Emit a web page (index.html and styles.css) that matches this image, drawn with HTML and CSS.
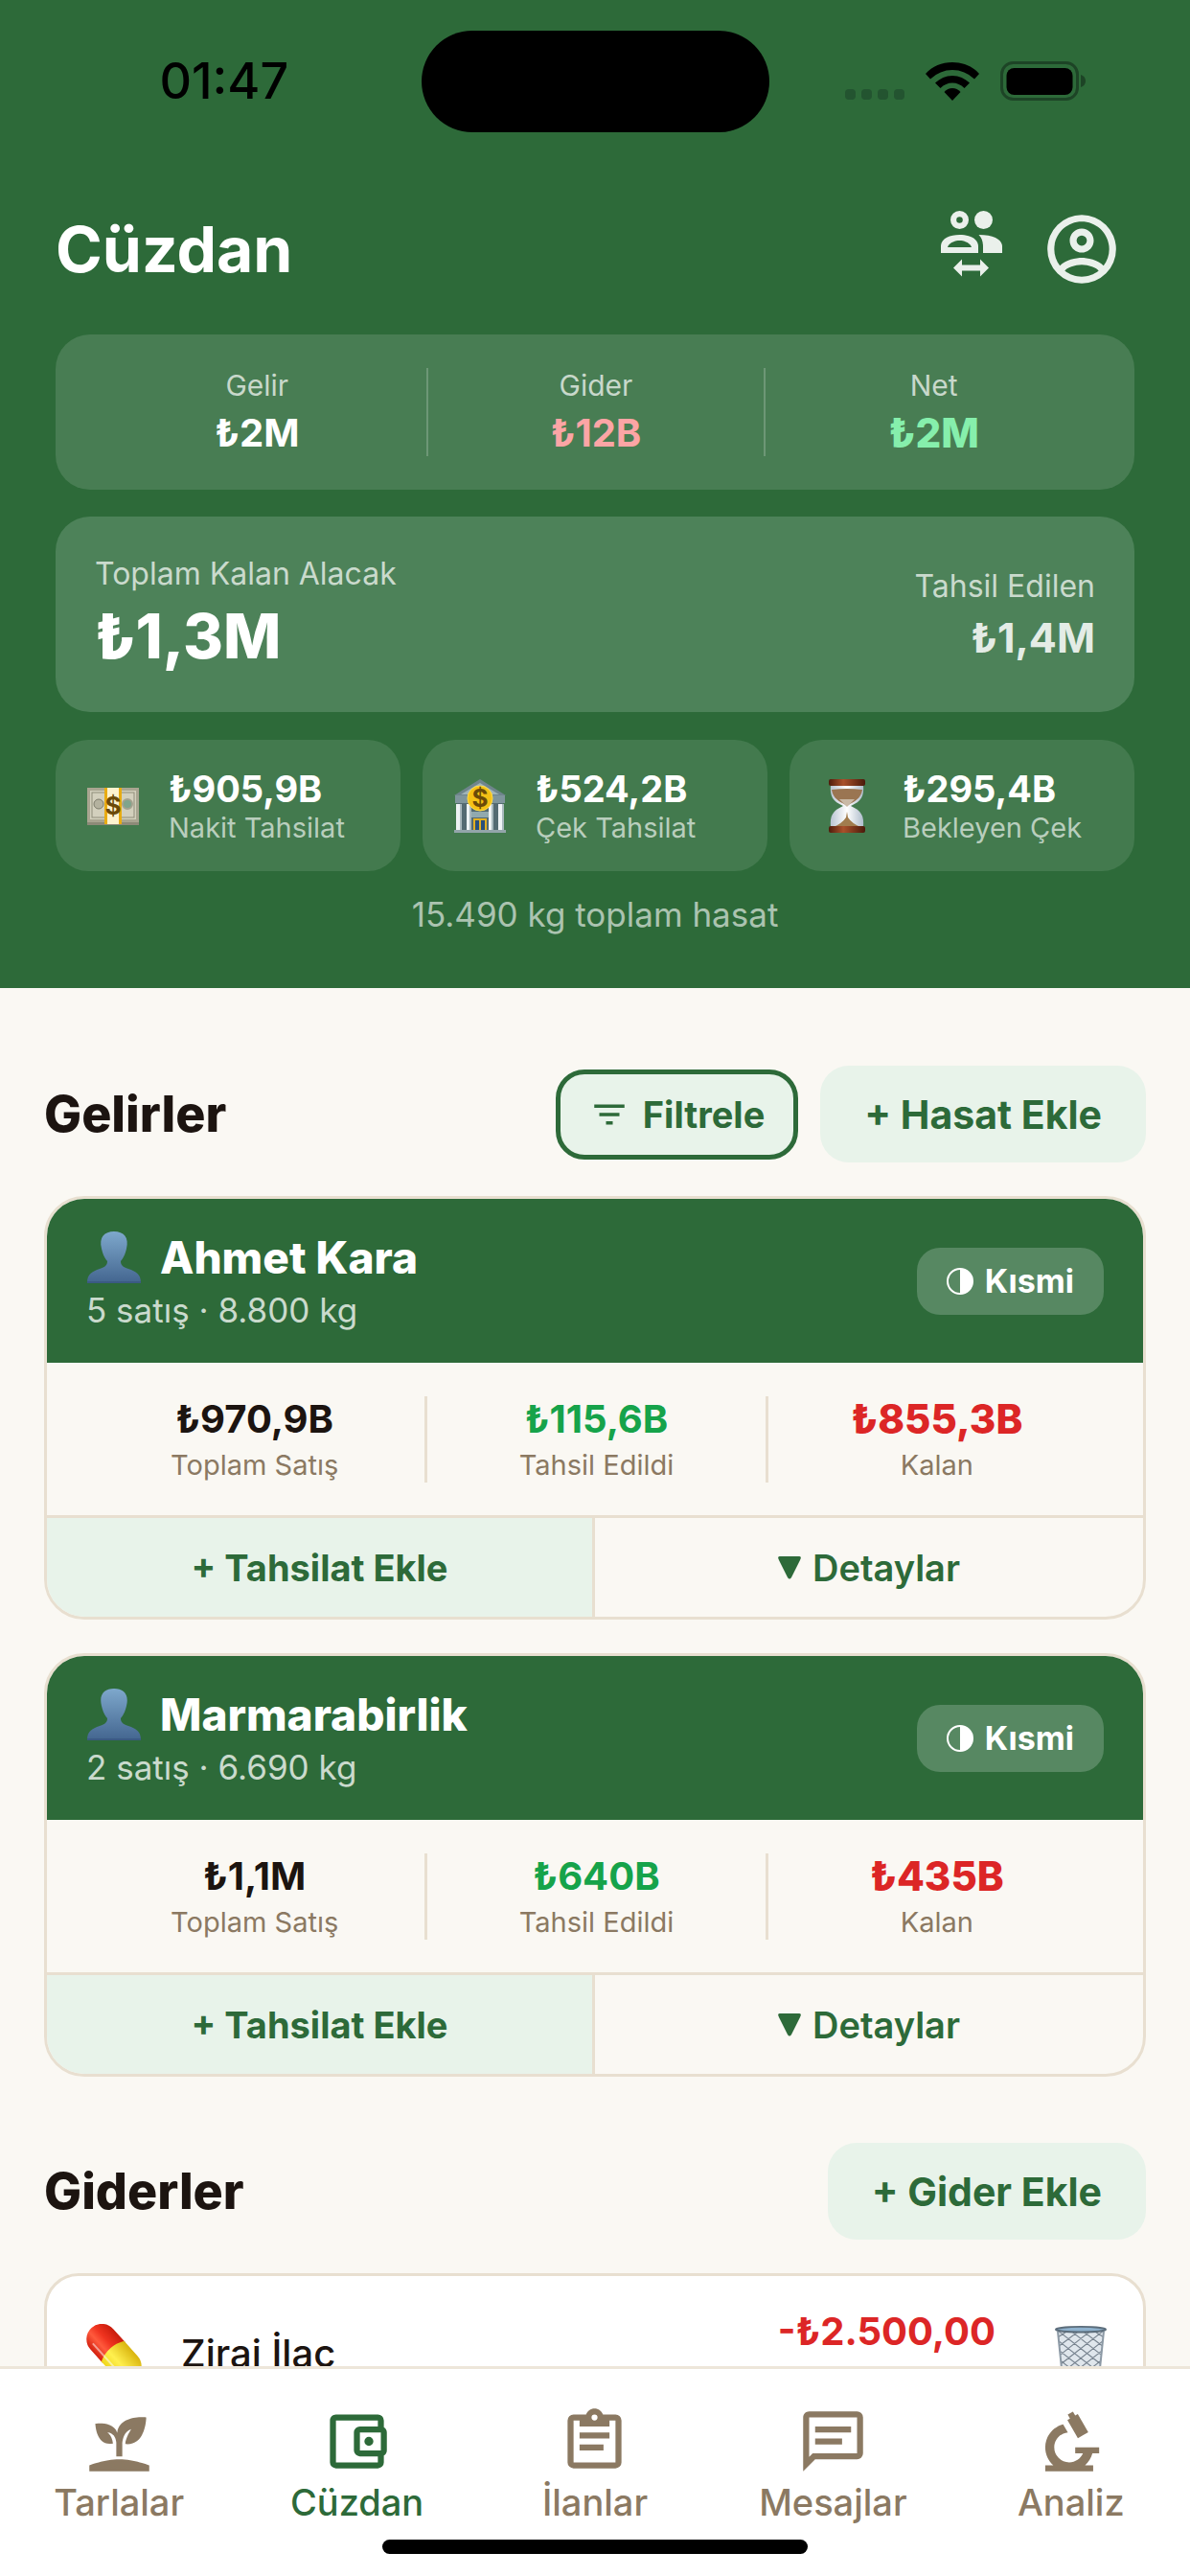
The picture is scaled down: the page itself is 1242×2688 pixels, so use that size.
FILE: index.html
```html
<!DOCTYPE html>
<html lang="tr">
  <head>
    <meta charset="UTF-8" />
    <meta name="viewport" content="width=device-width, initial-scale=1.0" />
    <title>Cüzdan</title>

    <link rel="stylesheet" href="styles.css">
  </head>
  <body>
    <!-- shared icons -->
    <svg class="defs" aria-hidden="true">
      <defs>
        <linearGradient id="bust" x1="0" y1="0" x2="0" y2="1">
          <stop offset="0" stop-color="#7ea8cc" />
          <stop offset="1" stop-color="#43658f" />
        </linearGradient>
        <linearGradient id="pillRed" x1="0" y1="0" x2="1" y2="0">
          <stop offset="0" stop-color="#d3200f" />
          <stop offset="0.35" stop-color="#ff5a3d" />
          <stop offset="0.6" stop-color="#f03420" />
          <stop offset="1" stop-color="#c81c0c" />
        </linearGradient>
        <linearGradient id="pillYellow" x1="0" y1="0" x2="1" y2="0">
          <stop offset="0" stop-color="#f0d61c" />
          <stop offset="0.4" stop-color="#fff04f" />
          <stop offset="1" stop-color="#d9b40e" />
        </linearGradient>
        <linearGradient id="wood" x1="0" y1="0" x2="1" y2="0">
          <stop offset="0" stop-color="#4e1c0c" />
          <stop offset="0.4" stop-color="#a9512b" />
          <stop offset="1" stop-color="#4a1a0b" />
        </linearGradient>
        <linearGradient id="glass" x1="0" y1="0" x2="1" y2="0">
          <stop offset="0" stop-color="#b9c4d2" />
          <stop offset="0.5" stop-color="#ffffff" />
          <stop offset="1" stop-color="#aebccb" />
        </linearGradient>
      </defs>
      <symbol id="person" viewBox="0 0 58 56">
        <path fill="url(#bust)" d="M1 55C1 45 6 43 14 40C20 38 22 36 22 32C18 27 17 23 16 19C13 7 19 1 29 1S45 7 42 19C41 23 40 27 36 32C36 36 38 38 44 40C52 43 57 45 57 55Z" />
        <path fill="#3b5a83" d="M1 53H57V55H1Z" />
      </symbol>
      <symbol id="half" viewBox="0 0 28 28">
        <circle cx="14" cy="14" r="13" fill="none" stroke="#fff" stroke-width="2" />
        <path fill="#fff" d="M14 1A13 13 0 0 1 14 27Z" />
      </symbol>
      <symbol id="down" viewBox="0 0 24 26">
        <path fill="currentColor" d="M2 1H22Q25 1 23 5L14 23Q12 26 10 23L1 5Q-1 1 2 1Z" />
      </symbol>
    </svg>

    <div class="app">
      <header class="header">
        <div class="status-bar">
          <div class="status-time">01:47</div>
          <div class="island"></div>
          <div class="status-icons">
            <svg width="62" height="13" viewBox="0 0 62 13" fill="#235430">
              <rect width="11" height="11" rx="4" />
              <rect x="17" width="11" height="11" rx="4" />
              <rect x="34" width="11" height="11" rx="4" />
              <rect x="51" width="11" height="11" rx="4" />
            </svg>
            <svg width="56" height="41" viewBox="0 0 56 41">
              <path d="M28 0C17 0 7 4 0 12L5 17.500Q15 8 28 8T51 17.500L56 12C49 4 39 0 28 0Z" />
              <path d="M28 14C21 14 15 17 10 21.500L15.500 27Q21 21.500 28 21.500T40.500 27L46 21.500C41 17 35 14 28 14Z" />
              <path d="M28 27C24.500 27 22 28.500 19.500 31L28 40L36.500 31C34 28.500 31.500 27 28 27Z" />
            </svg>
            <svg width="90" height="42" viewBox="0 0 90 42">
              <rect x="1.500" y="1.500" width="79" height="38" rx="12" fill="none" stroke="#1d4426" stroke-width="3" />
              <rect x="6.500" y="7" width="69" height="28" rx="8" />
              <path fill="#1d4426" d="M84 14C87 15 89 17 89 20.500S87 26 84 27Z" />
            </svg>
          </div>
        </div>

        <div class="title-row">
          <h1>Cüzdan</h1>
          <button class="icon-btn" aria-label="Hesap değiştir">
            <svg width="68" height="86" viewBox="20 17 68 86" fill="currentColor" fill-rule="evenodd">
              <path d="M41.500 20a9.500 9.500 0 1 0 0 19a9.500 9.500 0 1 0 0-19M41.500 26.200a3.300 3.300 0 1 1 0 6.600a3.300 3.300 0 1 1 0-6.600" />
              <circle cx="66.500" cy="29.500" r="9.500" />
              <path d="M22 64V57C22 49 31 45 41.500 45S61 49 61 57V64ZM29 58H54C53 54 47 51 41.500 51S30 54 29 58Z" />
              <path d="M61.500 45C77 45 86 50 86 57V64H66V57C66 52 64.500 48 61.500 45Z" />
              <path d="M35 79.500L44 70.500V76.500H63V70.500L72 79.500L63 88.500V82.500H44V88.500Z" />
            </svg>
          </button>
          <button class="icon-btn" aria-label="Profil">
            <svg width="86" height="86" viewBox="0 0 24 24" fill="currentColor">
              <path d="M12,2A10,10 0 0,0 2,12A10,10 0 0,0 12,22A10,10 0 0,0 22,12A10,10 0 0,0 12,2M7.07,18.28C7.5,17.38 10.12,16.5 12,16.5C13.88,16.5 16.5,17.38 16.93,18.28C15.57,19.36 13.86,20 12,20C10.14,20 8.43,19.36 7.07,18.28M18.36,16.83C16.93,15.09 13.46,14.5 12,14.5C10.54,14.5 7.07,15.09 5.64,16.83C4.62,15.5 4,13.82 4,12C4,7.59 7.59,4 12,4C16.41,4 20,7.59 20,12C20,13.82 19.38,15.5 18.36,16.83M12,6C10.06,6 8.5,7.56 8.5,9.5C8.5,11.44 10.06,13 12,13C13.94,13 15.5,11.44 15.5,9.5C15.5,7.56 13.94,6 12,6M12,11A1.5,1.5 0 0,1 10.5,9.5A1.5,1.5 0 0,1 12,8A1.5,1.5 0 0,1 13.5,9.5A1.5,1.5 0 0,1 12,11Z" />
            </svg>
          </button>
        </div>

        <div class="summary">
          <div class="summary-item">
            <span class="label">Gelir</span>
            <span class="value">₺2M</span>
          </div>
          <div class="summary-item">
            <span class="label">Gider</span>
            <span class="value pink">₺12B</span>
          </div>
          <div class="summary-item">
            <span class="label">Net</span>
            <span class="value mint">₺2M</span>
          </div>
        </div>

        <div class="receivable">
          <div>
            <div class="rec-label">Toplam Kalan Alacak</div>
            <div class="rec-total">₺1,3M</div>
          </div>
          <div class="rec-right">
            <div class="rec-label">Tahsil Edilen</div>
            <div class="rec-paid">₺1,4M</div>
          </div>
        </div>

        <div class="methods">
          <div class="method">
            <svg width="56" height="56" viewBox="0 0 56 56">
              <path fill="#8d8a78" d="M1 45H55V48H1Z" />
              <rect x="1" y="9" width="54" height="36" fill="#a9a591" />
              <rect x="4" y="12" width="48" height="30" fill="#d3d0bd" />
              <rect x="6" y="14" width="44" height="26" fill="none" stroke="#8f8d7b" stroke-width="1" />
              <circle cx="13" cy="26" r="5" fill="#b4b29f" stroke="#7d7c6c" />
              <circle cx="43" cy="26" r="5" fill="#7fa48c" stroke="#a3a28f" stroke-width="2" />
              <rect x="19" y="9" width="18" height="38" fill="#fdf3cf" />
              <path fill="#e8ac12" d="M19 9H22V47H19ZM34 9H37V47H34Z" />
              <text x="28" y="37" class="coin-sign">$</text>
            </svg>
            <div>
              <div class="method-value">₺905,9B</div>
              <div class="method-label">Nakit Tahsilat</div>
            </div>
          </div>
          <div class="method">
            <svg width="56" height="56" viewBox="0 0 56 56">
              <path fill="#6f858c" d="M28 0L55 17H1Z" />
              <path fill="#9fb3b8" d="M28 4L48 16H8Z" />
              <rect x="2" y="17" width="52" height="8" fill="#7f959b" />
              <rect x="4" y="25" width="48" height="28" fill="#546a72" />
              <path fill="#eef2f4" d="M3 26H9V53H3ZM14 26H19V53H14ZM37 26H42V53H37ZM47 26H53V53H47Z" />
              <path fill="#a9b8bd" d="M7 26H9V53H7ZM17 26H19V53H17ZM40 26H42V53H40ZM51 26H53V53H51Z" />
              <rect x="19" y="34" width="18" height="6" fill="#91a9ae" />
              <rect x="21" y="41" width="14" height="13" fill="#e3b021" />
              <path fill="#28507c" d="M23 43H27V54H23ZM29 43H33V54H29Z" />
              <rect x="1" y="53" width="54" height="3" fill="#93a5aa" />
              <circle cx="28" cy="20" r="13" fill="#f5c116" stroke="#ffdc4b" stroke-width="1" />
              <text x="28" y="29" class="coin-sign">$</text>
            </svg>
            <div>
              <div class="method-value">₺524,2B</div>
              <div class="method-label">Çek Tahsilat</div>
            </div>
          </div>
          <div class="method">
            <svg width="56" height="56" viewBox="0 0 56 56">
              <path fill="url(#glass)" d="M11 6H45C46 18 43 23 32 28C43 33 46 38 45 50H11C10 38 13 33 24 28C13 23 10 18 11 6Z" />
              <path fill="#9a7552" d="M12 11Q28 9 44 11C43 18 39 22 31 26L28 28L25 26C17 22 13 18 12 11Z" />
              <path fill="#c9b9a6" d="M20 21H36L31 26L28 29L25 26Z" />
              <path fill="#a17c4e" d="M28 34L29 40Q33 46 42 50H14Q23 46 27 40Z" />
              <rect x="9" y="0" width="38" height="7" rx="2" fill="url(#wood)" />
              <rect x="9" y="49" width="38" height="7" rx="2" fill="url(#wood)" />
            </svg>
            <div>
              <div class="method-value">₺295,4B</div>
              <div class="method-label">Bekleyen Çek</div>
            </div>
          </div>
        </div>

        <p class="harvest">15.490 kg toplam hasat</p>
      </header>

      <main class="content">
        <section class="section">
          <div class="section-head">
            <h2>Gelirler</h2>
            <button class="filter-btn">
              <svg width="42" height="42" viewBox="0 0 24 24" fill="currentColor">
                <path d="M6,13H18V11H6M3,6V8H21V6M10,18H14V16H10V18Z" />
              </svg>
              Filtrele
            </button>
            <button class="add-btn">+ Hasat Ekle</button>
          </div>

          <article class="buyer">
            <div class="buyer-head">
              <div>
                <h3><svg width="58" height="56"><use href="#person" /></svg>Ahmet Kara</h3>
                <p>5 satış · 8.800 kg</p>
              </div>
              <span class="badge"><svg width="28" height="28"><use href="#half" /></svg>Kısmi</span>
            </div>
            <div class="buyer-stats">
              <div class="stat"><b>₺970,9B</b><span>Toplam Satış</span></div>
              <div class="stat"><b class="green">₺115,6B</b><span>Tahsil Edildi</span></div>
              <div class="stat"><b class="red">₺855,3B</b><span>Kalan</span></div>
            </div>
            <div class="buyer-actions">
              <button class="collect">+ Tahsilat Ekle</button>
              <button class="details"><svg width="24" height="26"><use href="#down" /></svg>Detaylar</button>
            </div>
          </article>

          <article class="buyer">
            <div class="buyer-head">
              <div>
                <h3><svg width="58" height="56"><use href="#person" /></svg>Marmarabirlik</h3>
                <p>2 satış · 6.690 kg</p>
              </div>
              <span class="badge"><svg width="28" height="28"><use href="#half" /></svg>Kısmi</span>
            </div>
            <div class="buyer-stats">
              <div class="stat"><b>₺1,1M</b><span>Toplam Satış</span></div>
              <div class="stat"><b class="green">₺640B</b><span>Tahsil Edildi</span></div>
              <div class="stat"><b class="red">₺435B</b><span>Kalan</span></div>
            </div>
            <div class="buyer-actions">
              <button class="collect">+ Tahsilat Ekle</button>
              <button class="details"><svg width="24" height="26"><use href="#down" /></svg>Detaylar</button>
            </div>
          </article>
        </section>

        <section class="section">
          <div class="section-head">
            <h2>Giderler</h2>
            <button class="add-btn">+ Gider Ekle</button>
          </div>

          <article class="expense">
            <svg width="60" height="60" viewBox="0 0 60 60">
              <g transform="rotate(-42 30 30)">
                <path fill="url(#pillRed)" d="M14 30V11A16 16 0 0 1 46 11V30Z" />
                <path fill="url(#pillYellow)" d="M14 28Q30 20 46 28V49A16 16 0 0 1 14 49Z" />
                <path fill="none" stroke="#fff" stroke-opacity="0.500" stroke-width="2" d="M20 8V48" />
              </g>
            </svg>
            <span class="expense-name">Zirai İlaç</span>
            <span class="expense-amount">-₺2.500,00</span>
            <button class="trash" aria-label="Sil">
              <svg width="54" height="56" viewBox="0 0 54 60" preserveAspectRatio="none">
                <path fill="#dfe6ec" d="M3 5H51L46 58H8Z" />
                <path fill="none" stroke="#76828e" stroke-width="1.200" d="M4 12L14 5M5 22L26 5M6 32L38 5M7 42L50 6M8 52L50 17M13 58L49 28M25 58L48 39M37 58L47 50M50 12L40 5M49 22L28 5M48 32L16 5M47 42L4 6M46 52L4 17M41 58L5 28M29 58L6 39M17 58L7 50" />
                <path fill="none" stroke="#8c99a5" stroke-width="2" d="M3 6L8 58H46L51 6" />
                <ellipse cx="27" cy="4" rx="26" ry="3" fill="#8fb2ce" stroke="#5c6d7b" stroke-width="2" />
              </svg>
            </button>
          </article>
        </section>
      </main>

      <nav class="tabbar">
        <div class="tabs">
          <a class="tab" href="#tarlalar">
            <svg width="75" height="75" viewBox="0 0 24 24" fill="currentColor">
              <path d="M2,22V20C2,20 7,18 12,18C17,18 22,20 22,20V22H2M11.3,9.1C10.1,5.2 4,6.1 4,6.1C4,6.1 4.2,13.9 9.9,12.7C9.5,9.8 8,9 8,9C10.8,9 11,12.4 11,12.4V17C11.3,17 11.7,17 12,17C12.3,17 12.7,17 13,17V12.8C13,12.8 13,8.9 16,7.9C16,7.9 14,10.9 14,12.9C21,13.6 21,4 21,4C21,4 12.1,3 11.3,9.1Z" />
            </svg>
            Tarlalar
          </a>
          <a class="tab active" href="#cuzdan">
            <svg width="75" height="75" viewBox="0 0 24 24" fill="currentColor">
              <path d="M5,3C3.89,3 3,3.9 3,5V19A2,2 0 0,0 5,21H19A2,2 0 0,0 21,19V16.72C21.59,16.37 22,15.74 22,15V9C22,8.26 21.59,7.63 21,7.28V5A2,2 0 0,0 19,3H5M5,5H19V7H13A2,2 0 0,0 11,9V15A2,2 0 0,0 13,17H19V19H5V5M13,9H20V15H13V9M16,10.5A1.5,1.5 0 0,0 14.5,12A1.5,1.5 0 0,0 16,13.5A1.5,1.5 0 0,0 17.5,12A1.5,1.5 0 0,0 16,10.5Z" />
            </svg>
            Cüzdan
          </a>
          <a class="tab" href="#ilanlar">
            <svg width="75" height="75" viewBox="0 0 24 24" fill="currentColor">
              <path d="M19,3H14.82C14.4,1.84 13.3,1 12,1C10.7,1 9.6,1.84 9.18,3H5A2,2 0 0,0 3,5V19A2,2 0 0,0 5,21H19A2,2 0 0,0 21,19V5A2,2 0 0,0 19,3M12,3A1,1 0 0,1 13,4A1,1 0 0,1 12,5A1,1 0 0,1 11,4A1,1 0 0,1 12,3M7,7H17V5H19V19H5V5H7V7M17,11H7V9H17V11M15,15H7V13H15V15Z" />
            </svg>
            İlanlar
          </a>
          <a class="tab" href="#mesajlar">
            <svg width="75" height="75" viewBox="0 0 24 24" fill="currentColor">
              <path d="M20,2A2,2 0 0,1 22,4V16A2,2 0 0,1 20,18H6L2,22V4C2,2.89 2.9,2 4,2H20M4,4V17.17L5.17,16H20V4H4M6,7H18V9H6V7M6,11H15V13H6V11Z" />
            </svg>
            Mesajlar
          </a>
          <a class="tab" href="#analiz">
            <svg width="75" height="75" viewBox="0 0 24 24" fill="currentColor">
              <path d="M9.46,6.28L11.05,9C8.47,9.26 6.5,11.41 6.5,14A5,5 0 0,0 11.5,19C13.55,19 15.31,17.77 16.08,16H13.5V14H21.5V16H19.25C18.84,17.57 17.97,18.96 16.79,20H19.5V22H3.5V20H6.21C4.55,18.53 3.5,16.39 3.5,14C3.5,10.37 5.96,7.2 9.46,6.28M12.74,2.07L13.5,3.37L14.36,2.87L17.86,8.93L14.39,10.93L10.89,4.87L11.76,4.37L11,3.07L12.74,2.07Z" />
            </svg>
            Analiz
          </a>
        </div>
        <div class="home-indicator"></div>
      </nav>
    </div>
  </body>
</html>
```
FILE: styles.css
```css
* {
  box-sizing: border-box;
}
body {
  margin: 0;
  font-family: Inter, "Noto Sans", sans-serif;
  color: #1c1410;
  background-color: #faf8f3;
}
h1,
h2,
h3,
p {
  margin: 0;
}
button {
  margin: 0;
  padding: 0;
  border: none;
  background: none;
  font-family: inherit;
  color: #2d6a39;
}
svg {
  display: block;
  flex-shrink: 0;
}
.defs {
  position: absolute;
  width: 0;
  height: 0;
}
.app {
  display: flex;
  flex-direction: column;
  height: 100vh;
}

/* green header */
.header {
  flex-shrink: 0;
  padding: 32px 58px 56px;
  background-color: #2d6a39;
  color: white;
}
.status-bar {
  display: flex;
  align-items: center;
  margin: 0 -58px;
  color: black;
}
.status-time {
  flex: 1;
  padding-left: 28px;
  text-align: center;
  font-size: 52px;
  line-height: 60px;
  font-weight: 500;
}
.island {
  width: 363px;
  height: 106px;
  border-radius: 53px;
  background-color: black;
}
.status-icons {
  flex: 1;
  display: flex;
  justify-content: center;
  align-items: flex-end;
  gap: 22px;
  padding-right: 28px;
}
.title-row {
  display: flex;
  align-items: center;
  gap: 38px;
  margin: 79px 12px 46px 0;
}
.title-row h1 {
  flex: 1;
  font-size: 66px;
  line-height: 86px;
  font-weight: 700;
}
.icon-btn {
  color: #eaf0eb;
}

.summary {
  display: grid;
  grid-template-columns: repeat(3, 1fr);
  padding: 35px 34px;
  border-radius: 36px;
  background-color: #487d53;
}
.summary-item {
  display: flex;
  flex-direction: column;
  align-items: center;
  gap: 8px;
}
.summary-item + .summary-item {
  border-left: 2px solid #6d9776;
}
.label {
  font-size: 30px;
  line-height: 36px;
  color: #c8d8cb;
}
.value {
  font-size: 40px;
  line-height: 48px;
  font-weight: 700;
}
.pink {
  color: #fca5a5;
}
.mint {
  color: #86efac;
  font-size: 42px;
  font-weight: 800;
}

.receivable {
  display: flex;
  justify-content: space-between;
  align-items: center;
  margin-top: 28px;
  padding: 39px 41px;
  border-radius: 36px;
  background-color: #4d8259;
}
.rec-label {
  font-size: 32px;
  line-height: 42px;
  color: #cadacd;
}
.rec-total {
  margin-top: 4px;
  font-size: 64px;
  line-height: 80px;
  font-weight: 800;
}
.rec-right {
  text-align: right;
}
.rec-paid {
  margin-top: 6px;
  font-size: 43px;
  line-height: 52px;
  font-weight: 700;
  color: #e4ece6;
}

.methods {
  display: grid;
  grid-template-columns: repeat(3, 1fr);
  gap: 23px;
  margin-top: 29px;
}
.method {
  display: flex;
  align-items: center;
  gap: 30px;
  padding: 28px 32px;
  border-radius: 34px;
  background-color: #437a4e;
  white-space: nowrap;
}
.method-value {
  font-size: 38px;
  line-height: 47px;
  font-weight: 700;
}
.method-label {
  font-size: 29px;
  line-height: 34px;
  color: #b9cebd;
}
.coin-sign {
  font-size: 26px;
  font-weight: 700;
  text-anchor: middle;
  fill: #6b4a08;
}
.harvest {
  margin-top: 24px;
  font-size: 35px;
  line-height: 42px;
  text-align: center;
  color: #abc3b0;
}

/* scrolling lists */
.content {
  flex: 1;
  min-height: 0;
  overflow: auto;
  scrollbar-width: none;
  padding: 81px 46px 0;
}
.section {
  display: flex;
  flex-direction: column;
  gap: 35px;
  margin-bottom: 69px;
}
.section-head {
  display: flex;
  align-items: center;
  gap: 23px;
}
.section-head h2 {
  flex: 1;
  font-size: 52px;
  font-weight: 800;
}
.filter-btn {
  display: flex;
  align-items: center;
  gap: 14px;
  padding: 0 30px;
  height: 94px;
  border: 5px solid #2d6a39;
  border-radius: 30px;
  background-color: #e8f3ea;
  font-size: 38px;
  font-weight: 700;
}
.add-btn {
  padding: 0 46px;
  height: 101px;
  border-radius: 30px;
  background-color: #e8f3ea;
  font-size: 41px;
  font-weight: 700;
}
.buyer {
  overflow: hidden;
  border: 3px solid #e8dfd0;
  border-radius: 42px;
}
.buyer-head {
  display: flex;
  justify-content: space-between;
  align-items: center;
  padding: 32px 41px;
  background-color: #2d6a39;
  color: white;
}
.buyer-head h3 {
  display: flex;
  align-items: center;
  gap: 19px;
  font-size: 46px;
  line-height: 58px;
  font-weight: 800;
}
.buyer-head p {
  margin-top: 3px;
  font-size: 35px;
  line-height: 46px;
  color: #cadacd;
}
.badge {
  display: flex;
  align-items: center;
  gap: 12px;
  padding: 0 31px;
  border-radius: 24px;
  background-color: #578862;
  font-size: 34px;
  line-height: 70px;
  font-weight: 700;
}
.buyer-stats {
  display: grid;
  grid-template-columns: repeat(3, 1fr);
  padding: 35px 39px 34px;
}
.stat {
  display: flex;
  flex-direction: column;
  align-items: center;
  gap: 6px;
}
.stat + .stat {
  border-left: 3px solid #e8dfd0;
}
.stat b {
  font-size: 40px;
  line-height: 48px;
  font-weight: 700;
}
.stat span {
  font-size: 29px;
  line-height: 36px;
  color: #8b7962;
}
.stat .green {
  color: #16a34a;
}
.stat .red {
  color: #dc2626;
  font-size: 42px;
  font-weight: 800;
}
.buyer-actions {
  display: grid;
  grid-template-columns: 1fr 1fr;
  border-top: 3px solid #e8dfd0;
}
.buyer-actions button {
  display: flex;
  justify-content: center;
  align-items: center;
  gap: 12px;
  height: 103px;
  font-size: 38px;
  font-weight: 600;
}
.buyer-actions .collect {
  border-right: 3px solid #e8dfd0;
  background-color: #e8f3ea;
  font-weight: 700;
}
.expense {
  display: flex;
  align-items: center;
  padding: 33px 38px 33px 40px;
  border: 3px solid #e8dfd0;
  border-radius: 36px;
  background-color: white;
}
.expense-name {
  flex: 1;
  margin-left: 40px;
  font-size: 40px;
  font-weight: 500;
}
.expense-amount {
  align-self: flex-start;
  height: 94px;
  font-size: 40px;
  line-height: 50px;
  font-weight: 700;
  color: #dc2626;
}
.trash {
  margin-left: 62px;
}

/* bottom navigation */
.tabbar {
  flex-shrink: 0;
  padding: 38px 0 23px;
  border-top: 3px solid #ede6da;
  background-color: white;
}
.tabs {
  display: grid;
  grid-template-columns: repeat(5, 1fr);
}
.tab {
  display: flex;
  flex-direction: column;
  align-items: center;
  gap: 3px;
  font-size: 38px;
  line-height: 46px;
  font-weight: 500;
  color: #8b7962;
  text-decoration: none;
}
.active {
  color: #2d6a39;
}
.home-indicator {
  width: 444px;
  height: 15px;
  margin: 16px auto 0;
  border-radius: 8px;
  background-color: black;
}
```
